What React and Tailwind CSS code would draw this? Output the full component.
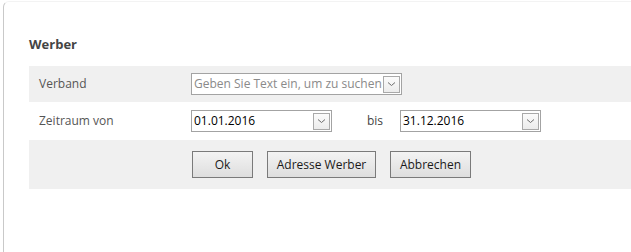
const font = { fontFamily: "'Open Sans', 'Noto Sans', sans-serif" };

const Chevron = () => (
  <svg width="9" height="6" viewBox="0 0 9 6" className="block">
    <path d="M1 1.5 L4.5 4.5 L8 1.5" fill="none" stroke="#6d6d6d" strokeWidth="1" />
  </svg>
);

const DropButton = () => (
  <span className="flex h-[17px] w-[17px] shrink-0 items-center justify-center border border-[#a9a9a9] bg-gradient-to-b from-[#fbfbfb] to-[#ececec]">
    <Chevron />
  </span>
);

const Combo = ({ value, placeholder, width }) => (
  <div
    className="flex h-[22px] items-center border border-[#a3a3a3] bg-white pl-[2px] pr-[1px]"
    style={{ width }}
  >
    <span
      className={
        "min-w-0 flex-1 overflow-hidden whitespace-nowrap text-[12px] leading-[18px] " +
        (value ? "text-black" : "text-[#8a8a8a]")
      }
    >
      {value || placeholder}
    </span>
    <DropButton />
  </div>
);

const Button = ({ children, className }) => (
  <button
    className={
      "flex h-[27px] items-center justify-center border border-[#7a7a7a] bg-gradient-to-b from-[#f3f3f3] to-[#dedede] text-[12px] text-[#1a1a1a] " +
      className
    }
  >
    {children}
  </button>
);

export default function App() {
  return (
    <div className="h-[252px] w-[631px] overflow-hidden bg-white" style={font}>
      <div className="ml-[3px] mt-[1px] h-[320px] rounded-tl-[6px] border-l border-t border-l-[#c9c9c9] border-t-[#f3f3f3] pl-[25px] pt-[33px]">
        <h2 className="mb-[13px] text-[13px] font-bold leading-[18px] text-[#444]">Werber</h2>

        <div className="flex h-[36px] items-center bg-[#f0f0f0]">
          <span className="w-[162px] pl-[10px] text-[12px] text-[#555]">Verband</span>
          <Combo placeholder="Geben Sie Text ein, um zu suchen" width={211} />
        </div>

        <div className="flex h-[38px] items-center">
          <span className="w-[162px] pl-[10px] text-[12px] text-[#555]">Zeitraum von</span>
          <Combo value="01.01.2016" width={141} />
          <span className="w-[68px] pl-[35px] text-[12px] text-[#444]">bis</span>
          <Combo value="31.12.2016" width={141} />
        </div>

        <div className="flex h-[49px] items-center bg-[#f0f0f0] pl-[163px]">
          <Button className="w-[61px]">Ok</Button>
          <Button className="ml-[14px] w-[109px]">Adresse Werber</Button>
          <Button className="ml-[14px] w-[81px]">Abbrechen</Button>
        </div>
      </div>
    </div>
  );
}
